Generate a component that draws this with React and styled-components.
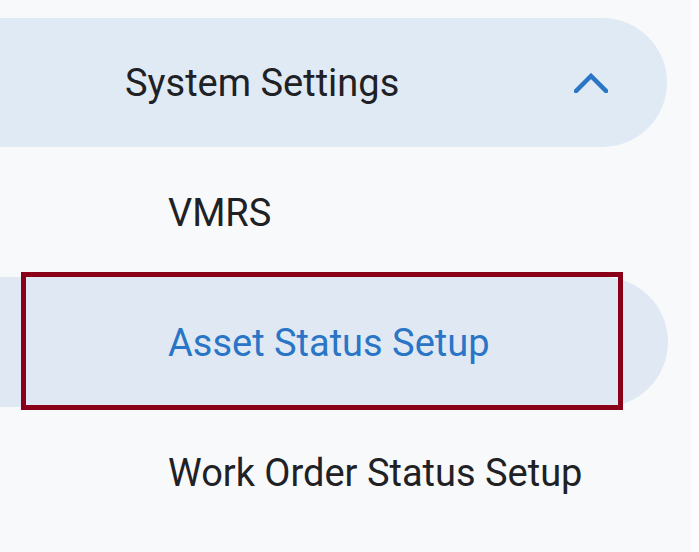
import {createGlobalStyle, styled} from 'styled-components';

const GlobalStyle = createGlobalStyle`
  html, body {
    margin: 0;
    padding: 0;
    background: #fcfcfd;
  }
  body {
    font-family: Roboto, "Liberation Sans", sans-serif;
  }
`;

const items = [
  {label: 'VMRS'},
  {label: 'Asset Status Setup', active: true},
  {label: 'Work Order Status Setup'},
];

const App = () => {
  return (
    <>
      <GlobalStyle />
      <Page>
        <Sidebar>
          <GroupHeader>
            <GroupTitle>System Settings</GroupTitle>
            <Chevron viewBox="0 0 34 20" aria-hidden="true">
              <path d="M2 18 L17 3 L32 18" />
            </Chevron>
          </GroupHeader>
          <SubList>
            {items.map((item) => (
              <SubItem key={item.label} $active={item.active}>
                <SubLink href="#" $active={item.active}>
                  {item.label}
                </SubLink>
              </SubItem>
            ))}
          </SubList>
        </Sidebar>
        <Edge />
      </Page>
    </>
  );
};

export default App;

const Page = styled.div`
  display: flex;
  height: 552px;
  overflow: hidden;
`;

const Sidebar = styled.nav`
  width: 690px;
  flex-shrink: 0;
  background: #f8f9fb;
  padding-top: 18px;
  box-sizing: border-box;
`;

const Edge = styled.div`
  flex: 1;
  background: #fcfcfd;
`;

const GroupHeader = styled.div`
  display: flex;
  align-items: center;
  justify-content: space-between;
  height: 129px;
  margin-right: 23px;
  padding: 0 59px 0 125px;
  background: #e0eaf5;
  border-radius: 0 65px 65px 0;
`;

const GroupTitle = styled.span`
  font-size: 38px;
  color: #202124;
`;

const Chevron = styled.svg`
  width: 34px;
  height: 20px;
  fill: none;
  stroke: #2a75c6;
  stroke-width: 4.5px;
  stroke-linecap: square;
`;

const SubList = styled.ul`
  list-style: none;
  margin: 0;
  padding: 0;
`;

const SubItem = styled.li`
  height: 130px;
  margin-right: 22px;
  display: flex;
  align-items: flex-start;
  background: ${({$active}) => ($active ? '#e0e9f3' : 'transparent')};
  border-radius: 0 65px 65px 0;
`;

const SubLink = styled.a`
  display: flex;
  align-items: center;
  margin-left: 26px;
  width: 592px;
  height: 128px;
  padding: 4px 0 0 142px;
  box-sizing: border-box;
  font-size: 38px;
  text-decoration: none;
  color: ${({$active}) => ($active ? '#2a75c6' : '#202124')};
  outline: ${({$active}) => ($active ? '5px solid #8a0018' : 'none')};
`;
